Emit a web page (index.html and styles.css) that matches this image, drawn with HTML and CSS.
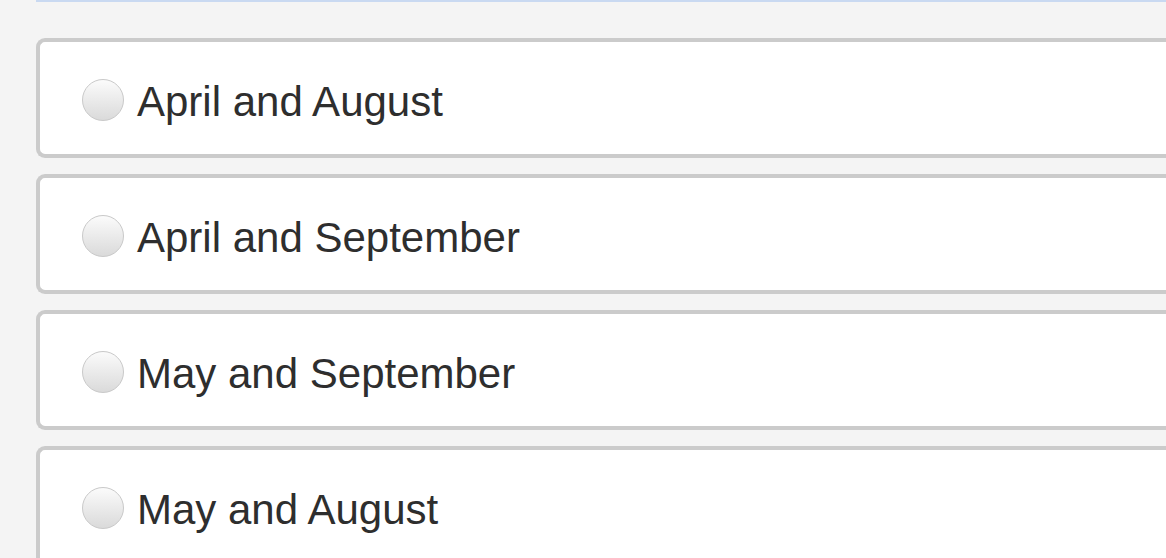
FILE: index.html
```html
<!DOCTYPE html>
<html lang="en">
<head>
  <meta charset="UTF-8">
  <title>Quiz answers</title>
  <link rel="stylesheet" href="styles.css">
</head>
<body>
  <div id="quiz">
    <div class="question-bar"></div>
    <div class="answers">
      <label class="answer">
        <input type="radio" name="answer" value="1">
        <span class="radio"></span>
        <span class="label">April and August</span>
      </label>
      <label class="answer">
        <input type="radio" name="answer" value="2">
        <span class="radio"></span>
        <span class="label">April and September</span>
      </label>
      <label class="answer">
        <input type="radio" name="answer" value="3">
        <span class="radio"></span>
        <span class="label">May and September</span>
      </label>
      <label class="answer">
        <input type="radio" name="answer" value="4">
        <span class="radio"></span>
        <span class="label">May and August</span>
      </label>
    </div>
  </div>
</body>
</html>
```

FILE: styles.css
```css
* {
  box-sizing: border-box;
}

html, body {
  margin: 0;
  padding: 0;
  height: 100%;
  overflow: hidden;
  background: #f4f4f4;
  font-family: "Liberation Sans", Arial, sans-serif;
  color: #2e2e2e;
}

#quiz {
  padding-left: 36px;
}

.question-bar {
  height: 2px;
  background: #c9d9f1;
}

.answers {
  display: flex;
  flex-direction: column;
  gap: 16px;
  margin-top: 36px;
}

/* cards run on past the right edge of the window */
.answer {
  display: flex;
  align-items: center;
  height: 120px;
  padding-left: 42px;
  background: #fff;
  border: 4px solid #cbcbcb;
  border-right: none;
  border-radius: 9px 0 0 9px;
  cursor: pointer;
}

.answer input {
  display: none;
}

.radio {
  flex: none;
  width: 42px;
  height: 42px;
  margin-top: 4px;
  border-radius: 50%;
  border: 1px solid #c9c9c9;
  background: linear-gradient(#fbfbfb, #dadada);
}

.label {
  margin-left: 13px;
  margin-top: 8px;
  font-size: 42px;
  line-height: 1;
}
```
